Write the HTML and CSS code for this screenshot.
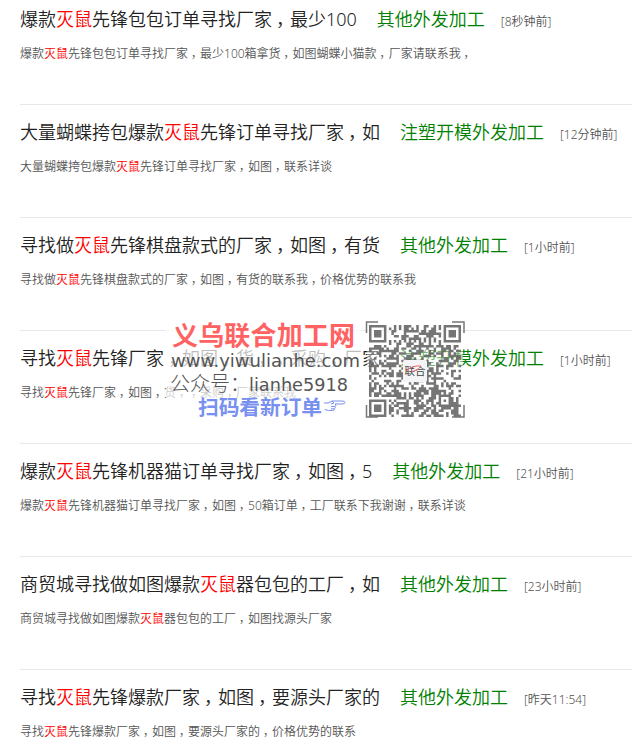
FILE: index.html
```html
<!DOCTYPE html>
<html lang="zh-CN">
<head>
<meta charset="utf-8">
<title>订单列表</title>
<link rel="stylesheet" href="styles.css">
</head>
<body>
<main class="orders">
  <article class="order">
    <h2 class="head"><span class="title">爆款<em>灭鼠</em>先锋包包订单寻找厂家<i>，</i>最少100</span><span class="type">其他外发加工</span><time>[8秒钟前]</time></h2>
    <p class="desc">爆款<em>灭鼠</em>先锋包包订单寻找厂家<i>，</i>最少100箱拿货<i>，</i>如图蝴蝶小猫款<i>，</i>厂家请联系我<i>，</i></p>
  </article>
  <article class="order">
    <h2 class="head"><span class="title">大量蝴蝶挎包爆款<em>灭鼠</em>先锋订单寻找厂家<i>，</i>如</span><span class="type">注塑开模外发加工</span><time>[12分钟前]</time></h2>
    <p class="desc">大量蝴蝶挎包爆款<em>灭鼠</em>先锋订单寻找厂家<i>，</i>如图<i>，</i>联系详谈</p>
  </article>
  <article class="order">
    <h2 class="head"><span class="title">寻找做<em>灭鼠</em>先锋棋盘款式的厂家<i>，</i>如图<i>，</i>有货</span><span class="type">其他外发加工</span><time>[1小时前]</time></h2>
    <p class="desc">寻找做<em>灭鼠</em>先锋棋盘款式的厂家<i>，</i>如图<i>，</i>有货的联系我<i>，</i>价格优势的联系我</p>
  </article>
  <article class="order">
    <h2 class="head"><span class="title">寻找<em>灭鼠</em>先锋厂家<i>，</i>如图<i>，</i>货<i>，</i><i>，</i>采购<i>，</i>厂家</span><span class="type">注塑开模外发加工</span><time>[1小时前]</time></h2>
    <p class="desc">寻找<em>灭鼠</em>先锋厂家<i>，</i>如图<i>，</i>货<i>，</i><i>，</i>采购<i>，</i>厂家联系我</p>
  </article>
  <article class="order">
    <h2 class="head"><span class="title">爆款<em>灭鼠</em>先锋机器猫订单寻找厂家<i>，</i>如图<i>，</i>5</span><span class="type">其他外发加工</span><time>[21小时前]</time></h2>
    <p class="desc">爆款<em>灭鼠</em>先锋机器猫订单寻找厂家<i>，</i>如图<i>，</i>50箱订单<i>，</i>工厂联系下我谢谢<i>，</i>联系详谈</p>
  </article>
  <article class="order">
    <h2 class="head"><span class="title">商贸城寻找做如图爆款<em>灭鼠</em>器包包的工厂<i>，</i>如</span><span class="type">其他外发加工</span><time>[23小时前]</time></h2>
    <p class="desc">商贸城寻找做如图爆款<em>灭鼠</em>器包包的工厂<i>，</i>如图找源头厂家</p>
  </article>
  <article class="order">
    <h2 class="head"><span class="title">寻找<em>灭鼠</em>先锋爆款厂家<i>，</i>如图<i>，</i>要源头厂家的</span><span class="type">其他外发加工</span><time>[昨天11:54]</time></h2>
    <p class="desc">寻找<em>灭鼠</em>先锋爆款厂家<i>，</i>如图<i>，</i>要源头厂家的<i>，</i>价格优势的联系</p>
  </article>
</main>
<svg class="watermark" width="300" height="102" viewBox="166 319 300 102">
  <rect class="veil" x="166" y="319" width="196" height="100"/>
  <text class="brand" x="172" y="345" textLength="183">义乌联合加工网</text>
  <text class="site" x="171" y="367" textLength="189" lengthAdjust="spacingAndGlyphs">www.yiwulianhe.com</text>
  <text class="account-label" x="170" y="391">公众号：</text>
  <text class="account" x="249" y="391" textLength="99" lengthAdjust="spacingAndGlyphs">lianhe5918</text>
  <text class="scan" x="198" y="414.500" textLength="124">扫码看新订单</text>
  <path class="hand" d="M324 403h4l4-2h10q3 0 3 1.500t-3 1.500h-7m0 0q2 1 0 2.500q1 1-.5 2.300q0 1.700-2 1.700h-4l-4-1M332 401l2 2-3 1M331 406.500h4M331 408.800h3"/>
  <g class="qr">
    <rect class="qr-back" x="367" y="323" width="96" height="95"/>
    <path id="modules"/>
    <path class="corner" d="M366.500 333V322H378M452 322h12v11M366.500 405v12H378M452 417h12v-12"/>
    <rect class="logo" x="403" y="360" width="24" height="22" rx="2"/>
    <text class="logo-text" x="404.500" y="375" textLength="21">联合</text>
    <path class="swoosh" d="M406 371q7-6 15-5M411 372l8-3"/>
  </g>
</svg>
<script src="qr.js"></script>
</body>
</html>
```
FILE: qr.js
```js
// Draw the code's modules: three finders, one alignment mark and the data area.
const N = 37, X = 369, Y = 325, U = 92 / N;
let seed = 5918;
const next = () => (seed = (seed * 1103515245 + 12345) % 2147483648) / 2147483648;
const ring = (r, c, r0, c0, size) => {
  const a = r - r0, b = c - c0;
  if (a < -1 || b < -1 || a > size || b > size) return null;
  const d = Math.min(a, b, size - 1 - a, size - 1 - b);
  return d === 0 || d >= 2;
};
let d = "";
for (let r = 0; r < N; r++) {
  for (let c = 0; c < N; c++) {
    const random = next() < 0.52;
    let on = ring(r, c, 0, 0, 7) ?? ring(r, c, 0, 30, 7) ?? ring(r, c, 30, 0, 7);
    if (on === null && r >= 28 && r <= 32 && c >= 28 && c <= 32) on = ring(r, c, 28, 28, 5);
    if (on === null && (r === 6 || c === 6)) on = (r + c) % 2 === 0;
    if (on ?? random) d += `M${(X + c * U).toFixed(2)} ${(Y + r * U).toFixed(2)}h${U.toFixed(2)}v${U.toFixed(2)}h-${U.toFixed(2)}z`;
  }
}
document.getElementById("modules").setAttribute("d", d);
```
FILE: styles.css
```css
body {
  margin: 0;
  background: #fff;
  font-family: "Noto Sans", "Noto Sans CJK SC", sans-serif;
}
.orders { padding-left: 20px; }
.order {
  box-sizing: border-box;
  height: 113px;
  padding-top: 13px;
  border-bottom: 1px solid #e8e8e8;
}
.order:first-child { height: 105px; padding-top: 5px; }
.order:last-child { height: 71px; border-bottom: 0; }
.head {
  display: flex;
  align-items: baseline;
  margin: 0;
  height: 28px;
  line-height: 28px;
  font-size: 18px;
  font-weight: 350;
  white-space: nowrap;
  color: #222;
}
.type { margin-left: 20px; color: #008000; }
.head time { margin-left: 16px; font-size: 12px; color: #555; }
.desc {
  margin: 11px 0 0;
  line-height: 20px;
  font-size: 12px;
  font-weight: 350;
  white-space: nowrap;
  color: #555;
}
em { font-style: normal; color: #f00; }
i {
  display: inline-block;
  box-sizing: border-box;
  width: 1em;
  padding-left: 0.22em;
  font-style: normal;
}
.watermark { position: absolute; left: 166px; top: 319px; }
.veil { fill: #fff; opacity: 0.7; }
.brand { font-size: 26px; font-weight: 700; fill: #ff6262; }
.site, .account { font-family: "DejaVu Sans", sans-serif; font-size: 18px; fill: #555; }
.account-label { font-size: 20px; font-weight: 300; fill: #555; }
.scan { font-size: 20.700px; font-weight: 700; fill: #7890ef; }
.hand { fill: none; stroke: #7890ef; stroke-width: 1; }
.qr-back { fill: #fff; opacity: 0.45; }
#modules { fill: #666; opacity: 0.9; }
.corner { fill: none; stroke: #777; stroke-width: 1.500; }
.logo { fill: #f4f4f7; }
.logo-text { font-size: 10.500px; fill: #444; }
.swoosh { fill: none; stroke: #e66; stroke-width: 1; }
```
